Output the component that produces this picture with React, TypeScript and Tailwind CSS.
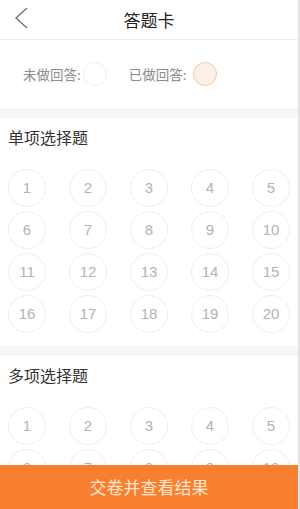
const font = { fontFamily: '"Noto Sans CJK SC", "Noto Sans", sans-serif' };
const digitFont = { fontFamily: '"Liberation Sans", "Noto Sans", sans-serif' };

function NumberGrid({ count }: { count: number }) {
  const nums = Array.from({ length: count }, (_, i) => i + 1);
  const rows: number[][] = [];
  for (let i = 0; i < nums.length; i += 5) rows.push(nums.slice(i, i + 5));
  return (
    <div className="flex flex-col gap-[4px] px-[8px]">
      {rows.map((row, r) => (
        <div key={r} className="flex justify-between">
          {row.map((n) => (
            <div
              key={n}
              className="w-[38px] h-[38px] rounded-full border border-[#efefef] flex items-center justify-center text-[15px] text-[#b3b3b3]"
              style={digitFont}
            >
              {n}
            </div>
          ))}
        </div>
      ))}
    </div>
  );
}

function Section({ title, count }: { title: string; count: number }) {
  return (
    <div className="bg-white pt-[8px] pb-[13px]">
      <h2 className="px-[8px] text-[16px] leading-[22px] text-[#333]">{title}</h2>
      <div className="mt-[21px]">
        <NumberGrid count={count} />
      </div>
    </div>
  );
}

export default function App() {
  return (
    <div className="w-[300px] h-[509px] flex bg-white overflow-hidden" style={font}>
      <div className="w-[298px] h-full flex flex-col">
        <header className="h-[40px] flex-shrink-0 flex items-center justify-center relative border-b border-[#ededed] bg-white">
          <svg
            className="absolute left-[12px] top-[6px]"
            width="18"
            height="24"
            viewBox="0 0 18 24"
            fill="none"
          >
            <path d="M15 2 L4 12 L15 22" stroke="#6f6f6f" strokeWidth="1.3" />
          </svg>
          <span className="text-[17px] text-[#222]">答题卡</span>
        </header>
        <div className="flex-1 overflow-hidden">
          <div className="h-[68px] flex items-center px-[23px] text-[13.5px] text-[#8c8c8c]">
            <span>未做回答:</span>
            <span className="ml-[2px] w-[24px] h-[24px] rounded-full border border-[#efefef]" />
            <span className="ml-[22px]">已做回答:</span>
            <span className="ml-[6px] w-[24px] h-[24px] rounded-full border border-[#f2c7a2] bg-[#fdf1e7]" />
          </div>
          <div className="h-[10px] bg-[#f4f7fa]" />
          <Section title="单项选择题" count={20} />
          <div className="h-[10px] bg-[#f4f7fa]" />
          <Section title="多项选择题" count={10} />
        </div>
        <footer className="h-[44px] flex-shrink-0 bg-[#f97f30] flex items-center justify-center text-[17px] text-[#fde6d1]">
          交卷并查看结果
        </footer>
      </div>
      <div className="w-[2px] h-full bg-[#e2e2e2]" />
    </div>
  );
}
